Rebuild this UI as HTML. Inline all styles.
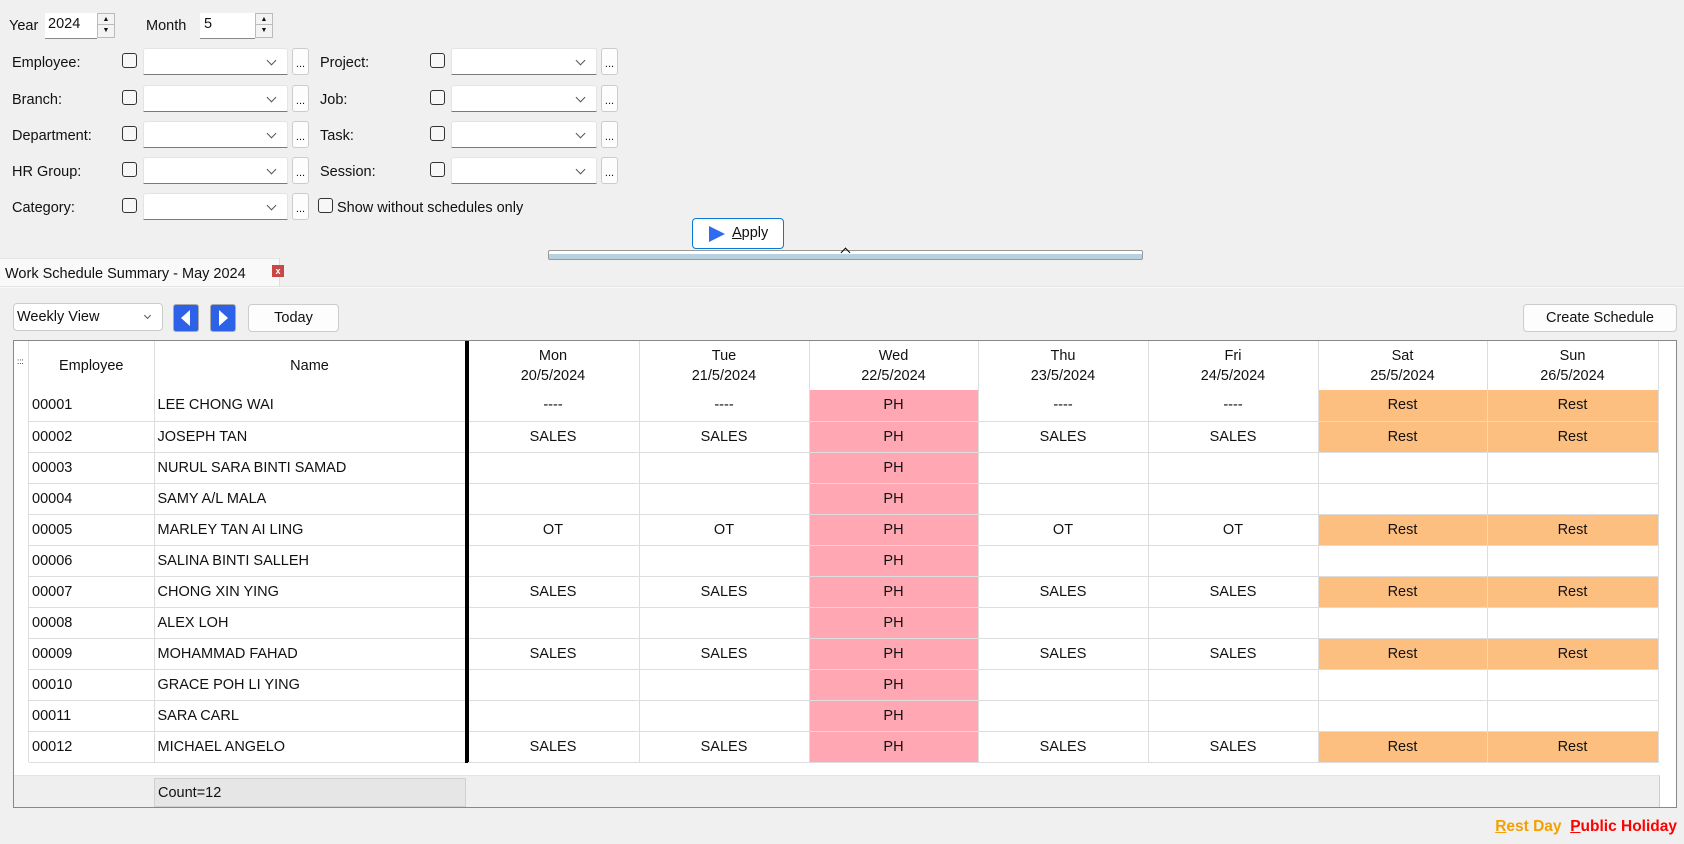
<!DOCTYPE html><html><head><style>
*{box-sizing:border-box;margin:0;padding:0}
body{width:1684px;height:844px;background:#f0f0f0;font-family:"Liberation Sans",sans-serif;font-size:14.5px;color:#111;position:relative;overflow:hidden}
.a{position:absolute}
.inp{position:absolute;background:#fff;border-bottom:1px solid #8a8a8a;height:26px}
.lbl{position:absolute;line-height:20px}
.cb{position:absolute;width:15px;height:15px;border:1px solid #333;border-radius:3px;background:#f7f7f7}
.combo{position:absolute;background:#fff;border-bottom:1px solid #7a7a7a;height:27px;border-top:1px solid #e4e4e4;border-left:1px solid #e4e4e4;border-right:1px solid #e4e4e4;border-radius:3px 3px 0 0}
.combo:after{content:"";position:absolute;right:12px;top:8px;width:6px;height:6px;border-right:1px solid #555;border-bottom:1px solid #555;transform:rotate(45deg)}
.dots{position:absolute;width:17px;height:27px;background:#fdfdfd;border:1px solid #ccc;border-radius:3px;font-size:11px;text-align:center;line-height:30px}
.spin{position:absolute;width:18px;height:25px;border:1px solid #bbb;background:#f3f3f3}
.spin div{height:11px;border-bottom:1px solid #bbb;font-size:7px;text-align:center;line-height:11px}
.btn{position:absolute;background:#fdfdfd;border:1px solid #ccc;border-radius:4px;text-align:center}
table{border-collapse:collapse;table-layout:fixed}
td{border-right:1px solid #ddd;border-bottom:1px solid #ddd;height:31px;text-align:center;padding:0;white-space:nowrap;overflow:hidden}
td.l{text-align:left;padding-left:3px}
.ph{background:#ffa8b4}.r{background:#fdbf7f}
th{font-weight:normal;height:49px;border-right:1px solid #ddd;line-height:20px}
</style></head><body>
<div class="lbl" style="left:9px;top:16px">Year</div>
<div class="inp" style="left:45px;top:13px;width:52px;padding:3px 3px;font-size:14.5px">2024</div>
<div class="spin" style="left:97px;top:13px"><div>▲</div><div style="border:0">▼</div></div>
<div class="lbl" style="left:146px;top:16px">Month</div>
<div class="inp" style="left:200px;top:13px;width:55px;padding:3px 4px">5</div>
<div class="spin" style="left:255px;top:13px"><div>▲</div><div style="border:0">▼</div></div>

<div class="lbl" style="left:12px;top:53px">Employee:</div>
<div class="lbl" style="left:12px;top:90px">Branch:</div>
<div class="lbl" style="left:12px;top:126px">Department:</div>
<div class="lbl" style="left:12px;top:162px">HR Group:</div>
<div class="lbl" style="left:12px;top:198px">Category:</div>
<div class="lbl" style="left:320px;top:53px">Project:</div>
<div class="lbl" style="left:320px;top:90px">Job:</div>
<div class="lbl" style="left:320px;top:126px">Task:</div>
<div class="lbl" style="left:320px;top:162px">Session:</div>

<div class="cb" style="left:122px;top:53px"></div><div class="combo" style="left:143px;top:48px;width:145px"></div><div class="dots" style="left:292px;top:48px">...</div>
<div class="cb" style="left:122px;top:90px"></div><div class="combo" style="left:143px;top:85px;width:145px"></div><div class="dots" style="left:292px;top:85px">...</div>
<div class="cb" style="left:122px;top:126px"></div><div class="combo" style="left:143px;top:121px;width:145px"></div><div class="dots" style="left:292px;top:121px">...</div>
<div class="cb" style="left:122px;top:162px"></div><div class="combo" style="left:143px;top:157px;width:145px"></div><div class="dots" style="left:292px;top:157px">...</div>
<div class="cb" style="left:122px;top:198px"></div><div class="combo" style="left:143px;top:193px;width:145px"></div><div class="dots" style="left:292px;top:193px">...</div>
<div class="cb" style="left:430px;top:53px"></div><div class="combo" style="left:451px;top:48px;width:146px"></div><div class="dots" style="left:601px;top:48px">...</div>
<div class="cb" style="left:430px;top:90px"></div><div class="combo" style="left:451px;top:85px;width:146px"></div><div class="dots" style="left:601px;top:85px">...</div>
<div class="cb" style="left:430px;top:126px"></div><div class="combo" style="left:451px;top:121px;width:146px"></div><div class="dots" style="left:601px;top:121px">...</div>
<div class="cb" style="left:430px;top:162px"></div><div class="combo" style="left:451px;top:157px;width:146px"></div><div class="dots" style="left:601px;top:157px">...</div>
<div class="cb" style="left:318px;top:198px"></div><div class="lbl" style="left:337px;top:198px">Show without schedules only</div>

<div class="btn" style="left:692px;top:218px;width:92px;height:31px;border:1px solid #0a78d4;background:#fff">
<svg class="a" style="left:15px;top:6px" width="18" height="18"><polygon points="1,1 17,9 1,17" fill="#2f6bf0"/></svg>
<span class="a" style="left:39px;top:6px"><u>A</u>pply</span></div>
<div class="a" style="left:548px;top:250px;width:595px;height:10px;border:1px solid #999;border-radius:2px;background:linear-gradient(#fff 0 40%,#b8d0e0 40%);"></div>
<div class="a" style="left:842px;top:249px;width:7px;height:7px;border-left:1.5px solid #000;border-top:1.5px solid #000;transform:rotate(45deg)"></div>

<div class="a" style="left:0;top:258px;width:280px;height:28px;background:#f9f9f9;border-right:1px solid #ddd;border-top:1px solid #e6e6e6"></div>
<div class="lbl" style="left:5px;top:264px">Work Schedule Summary - May 2024</div>
<div class="a" style="left:272px;top:265px;width:12px;height:12px;background:#c84848;color:#fff;font-size:9px;text-align:center;line-height:12px;font-weight:bold">x</div>
<div class="a" style="left:0;top:286px;width:1684px;height:2px;background:#fafafa;border-top:1px solid #e4e4e4"></div>

<div class="a" style="left:13px;top:303px;width:150px;height:28px;background:#fff;border:1px solid #ccc;border-radius:4px;padding:5px 3px">Weekly View</div>
<div class="a" style="left:145px;top:313px;width:5px;height:5px;border-right:1px solid #555;border-bottom:1px solid #555;transform:rotate(45deg)"></div>
<div class="a" style="left:173px;top:304px;width:26px;height:28px;background:#2d62e8;border:1px solid #aaa;border-radius:3px"><svg width="24" height="26"><polygon points="16,5 7,13 16,21" fill="#fff"/></svg></div>
<div class="a" style="left:210px;top:304px;width:26px;height:28px;background:#2d62e8;border:1px solid #aaa;border-radius:3px"><svg width="24" height="26"><polygon points="8,5 17,13 8,21" fill="#fff"/></svg></div>
<div class="btn" style="left:248px;top:304px;width:91px;height:28px;line-height:26px">Today</div>
<div class="btn" style="left:1523px;top:304px;width:154px;height:28px;line-height:26px">Create Schedule</div>

<div class="a" style="left:13px;top:340px;width:1664px;height:468px;background:#fff;border:1px solid #888"></div>
<div class="a" style="left:14px;top:775px;width:1646px;height:32px;background:#efefef;border-right:1px solid #ccc;border-top:1px solid #e4e4e4"></div>
<div class="a" style="left:154px;top:778px;width:312px;height:29px;background:#e6e6e6;border:1px solid #d0d0d0;padding:6px 3px">Count=12</div>
<div class="a" style="left:28px;top:341px;width:1px;height:421px;background:#ddd"></div>
<div class="a" style="left:17px;top:360px;font-size:8px;line-height:3px;color:#000">:::</div>
<table class="a" style="left:29px;top:341px">
<colgroup><col style="width:125px"><col style="width:312px"><col style="width:173px"><col style="width:170px"><col style="width:169px"><col style="width:170px"><col style="width:170px"><col style="width:169px"><col style="width:171px"></colgroup>
<tr><th>Employee</th><th style="border-right:3px solid #000">Name</th><th>Mon<br>20/5/2024</th><th>Tue<br>21/5/2024</th><th>Wed<br>22/5/2024</th><th>Thu<br>23/5/2024</th><th>Fri<br>24/5/2024</th><th>Sat<br>25/5/2024</th><th>Sun<br>26/5/2024</th></tr>
<tr><td class="l">00001</td><td class="l" style="border-right:3px solid #000">LEE CHONG WAI</td><td>----</td><td>----</td><td class="ph">PH</td><td>----</td><td>----</td><td class="r">Rest</td><td class="r">Rest</td></tr>
<tr><td class="l">00002</td><td class="l" style="border-right:3px solid #000">JOSEPH TAN</td><td>SALES</td><td>SALES</td><td class="ph">PH</td><td>SALES</td><td>SALES</td><td class="r">Rest</td><td class="r">Rest</td></tr>
<tr><td class="l">00003</td><td class="l" style="border-right:3px solid #000">NURUL SARA BINTI SAMAD</td><td></td><td></td><td class="ph">PH</td><td></td><td></td><td></td><td></td></tr>
<tr><td class="l">00004</td><td class="l" style="border-right:3px solid #000">SAMY A/L MALA</td><td></td><td></td><td class="ph">PH</td><td></td><td></td><td></td><td></td></tr>
<tr><td class="l">00005</td><td class="l" style="border-right:3px solid #000">MARLEY TAN AI LING</td><td>OT</td><td>OT</td><td class="ph">PH</td><td>OT</td><td>OT</td><td class="r">Rest</td><td class="r">Rest</td></tr>
<tr><td class="l">00006</td><td class="l" style="border-right:3px solid #000">SALINA BINTI SALLEH</td><td></td><td></td><td class="ph">PH</td><td></td><td></td><td></td><td></td></tr>
<tr><td class="l">00007</td><td class="l" style="border-right:3px solid #000">CHONG XIN YING</td><td>SALES</td><td>SALES</td><td class="ph">PH</td><td>SALES</td><td>SALES</td><td class="r">Rest</td><td class="r">Rest</td></tr>
<tr><td class="l">00008</td><td class="l" style="border-right:3px solid #000">ALEX LOH</td><td></td><td></td><td class="ph">PH</td><td></td><td></td><td></td><td></td></tr>
<tr><td class="l">00009</td><td class="l" style="border-right:3px solid #000">MOHAMMAD FAHAD</td><td>SALES</td><td>SALES</td><td class="ph">PH</td><td>SALES</td><td>SALES</td><td class="r">Rest</td><td class="r">Rest</td></tr>
<tr><td class="l">00010</td><td class="l" style="border-right:3px solid #000">GRACE POH LI YING</td><td></td><td></td><td class="ph">PH</td><td></td><td></td><td></td><td></td></tr>
<tr><td class="l">00011</td><td class="l" style="border-right:3px solid #000">SARA CARL</td><td></td><td></td><td class="ph">PH</td><td></td><td></td><td></td><td></td></tr>
<tr><td class="l">00012</td><td class="l" style="border-right:3px solid #000">MICHAEL ANGELO</td><td>SALES</td><td>SALES</td><td class="ph">PH</td><td>SALES</td><td>SALES</td><td class="r">Rest</td><td class="r">Rest</td></tr>
</table>
<div class="a" style="left:466px;top:341px;width:0;height:421px;border-left:3px solid #000"></div>
<div class="a" style="left:14px;top:764px;width:1660px;height:11px;background:#fff"></div>
<div class="a" style="right:7px;top:818px;font-weight:bold;font-size:15.5px"><span style="color:#f5a000"><u>R</u>est Day</span>&nbsp; <span style="color:#f00"><u>P</u>ublic Holiday</span></div>
</body></html>
